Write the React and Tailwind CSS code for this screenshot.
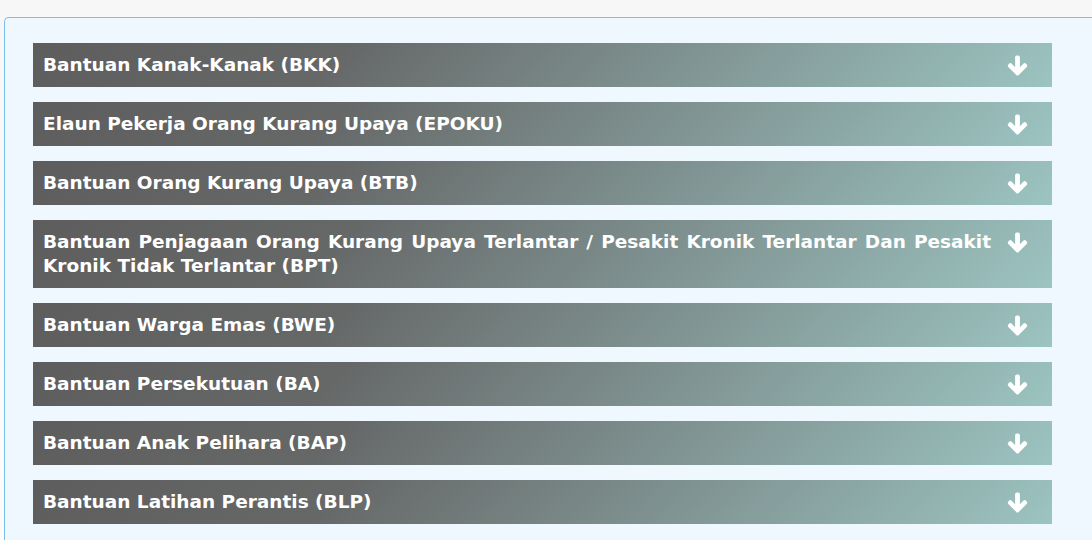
import React from "react";

const items = [
  "Bantuan Kanak-Kanak (BKK)",
  "Elaun Pekerja Orang Kurang Upaya (EPOKU)",
  "Bantuan Orang Kurang Upaya (BTB)",
  "Bantuan Penjagaan Orang Kurang Upaya Terlantar / Pesakit Kronik Terlantar Dan Pesakit Kronik Tidak Terlantar (BPT)",
  "Bantuan Warga Emas (BWE)",
  "Bantuan Persekutuan (BA)",
  "Bantuan Anak Pelihara (BAP)",
  "Bantuan Latihan Perantis (BLP)",
];

// arrow-down (solid) like the one in the accordion header
const ArrowDown = () => (
  <svg viewBox="0 0 448 512" className="w-[21px] h-[21px] fill-white stroke-white stroke-[36] shrink-0 overflow-visible" strokeLinejoin="round">
    <path d="M413.1 222.5l22.2 22.2c9.4 9.4 9.4 24.6 0 33.9L241 473c-9.4 9.4-24.6 9.4-33.9 0L12.7 278.6c-9.4-9.4-9.4-24.6 0-33.9l22.2-22.2c9.5-9.5 25-9.3 34.3.4L184 343.4V56c0-13.3 10.7-24 24-24h32c13.3 0 24 10.7 24 24v287.4l114.8-120.5c9.3-9.8 24.8-10 34.3-.4z" />
  </svg>
);

function App() {
  return (
    <div className="min-h-[540px] bg-linear-to-b from-[#f7f7f7] to-[#fcfcfc] pt-[17px] pl-[4px] font-['DejaVu_Sans',sans-serif]">
      <div className="min-h-[523px] bg-[#f0f8ff] border-l border-t border-[#7dbde9] rounded-tl-[5px] pt-[25px] pl-[28px] pr-[40px] pb-4">
        <div className="flex flex-col gap-[15px]">
          {items.map((t) => (
            <button
              key={t}
              className="flex items-start justify-between w-full text-left py-[10px] pl-[10px] pr-[24px] bg-[linear-gradient(135deg,#5e5d5d_0%,#666868_30%,#9cc4c1_100%)]"
            >
              <span className="text-white text-[18.5px] leading-[24px] font-bold text-justify w-[948px]">
                {t}
              </span>
              <span className="pt-[2px]">
                <ArrowDown />
              </span>
            </button>
          ))}
        </div>
      </div>
    </div>
  );
}

export default App;
